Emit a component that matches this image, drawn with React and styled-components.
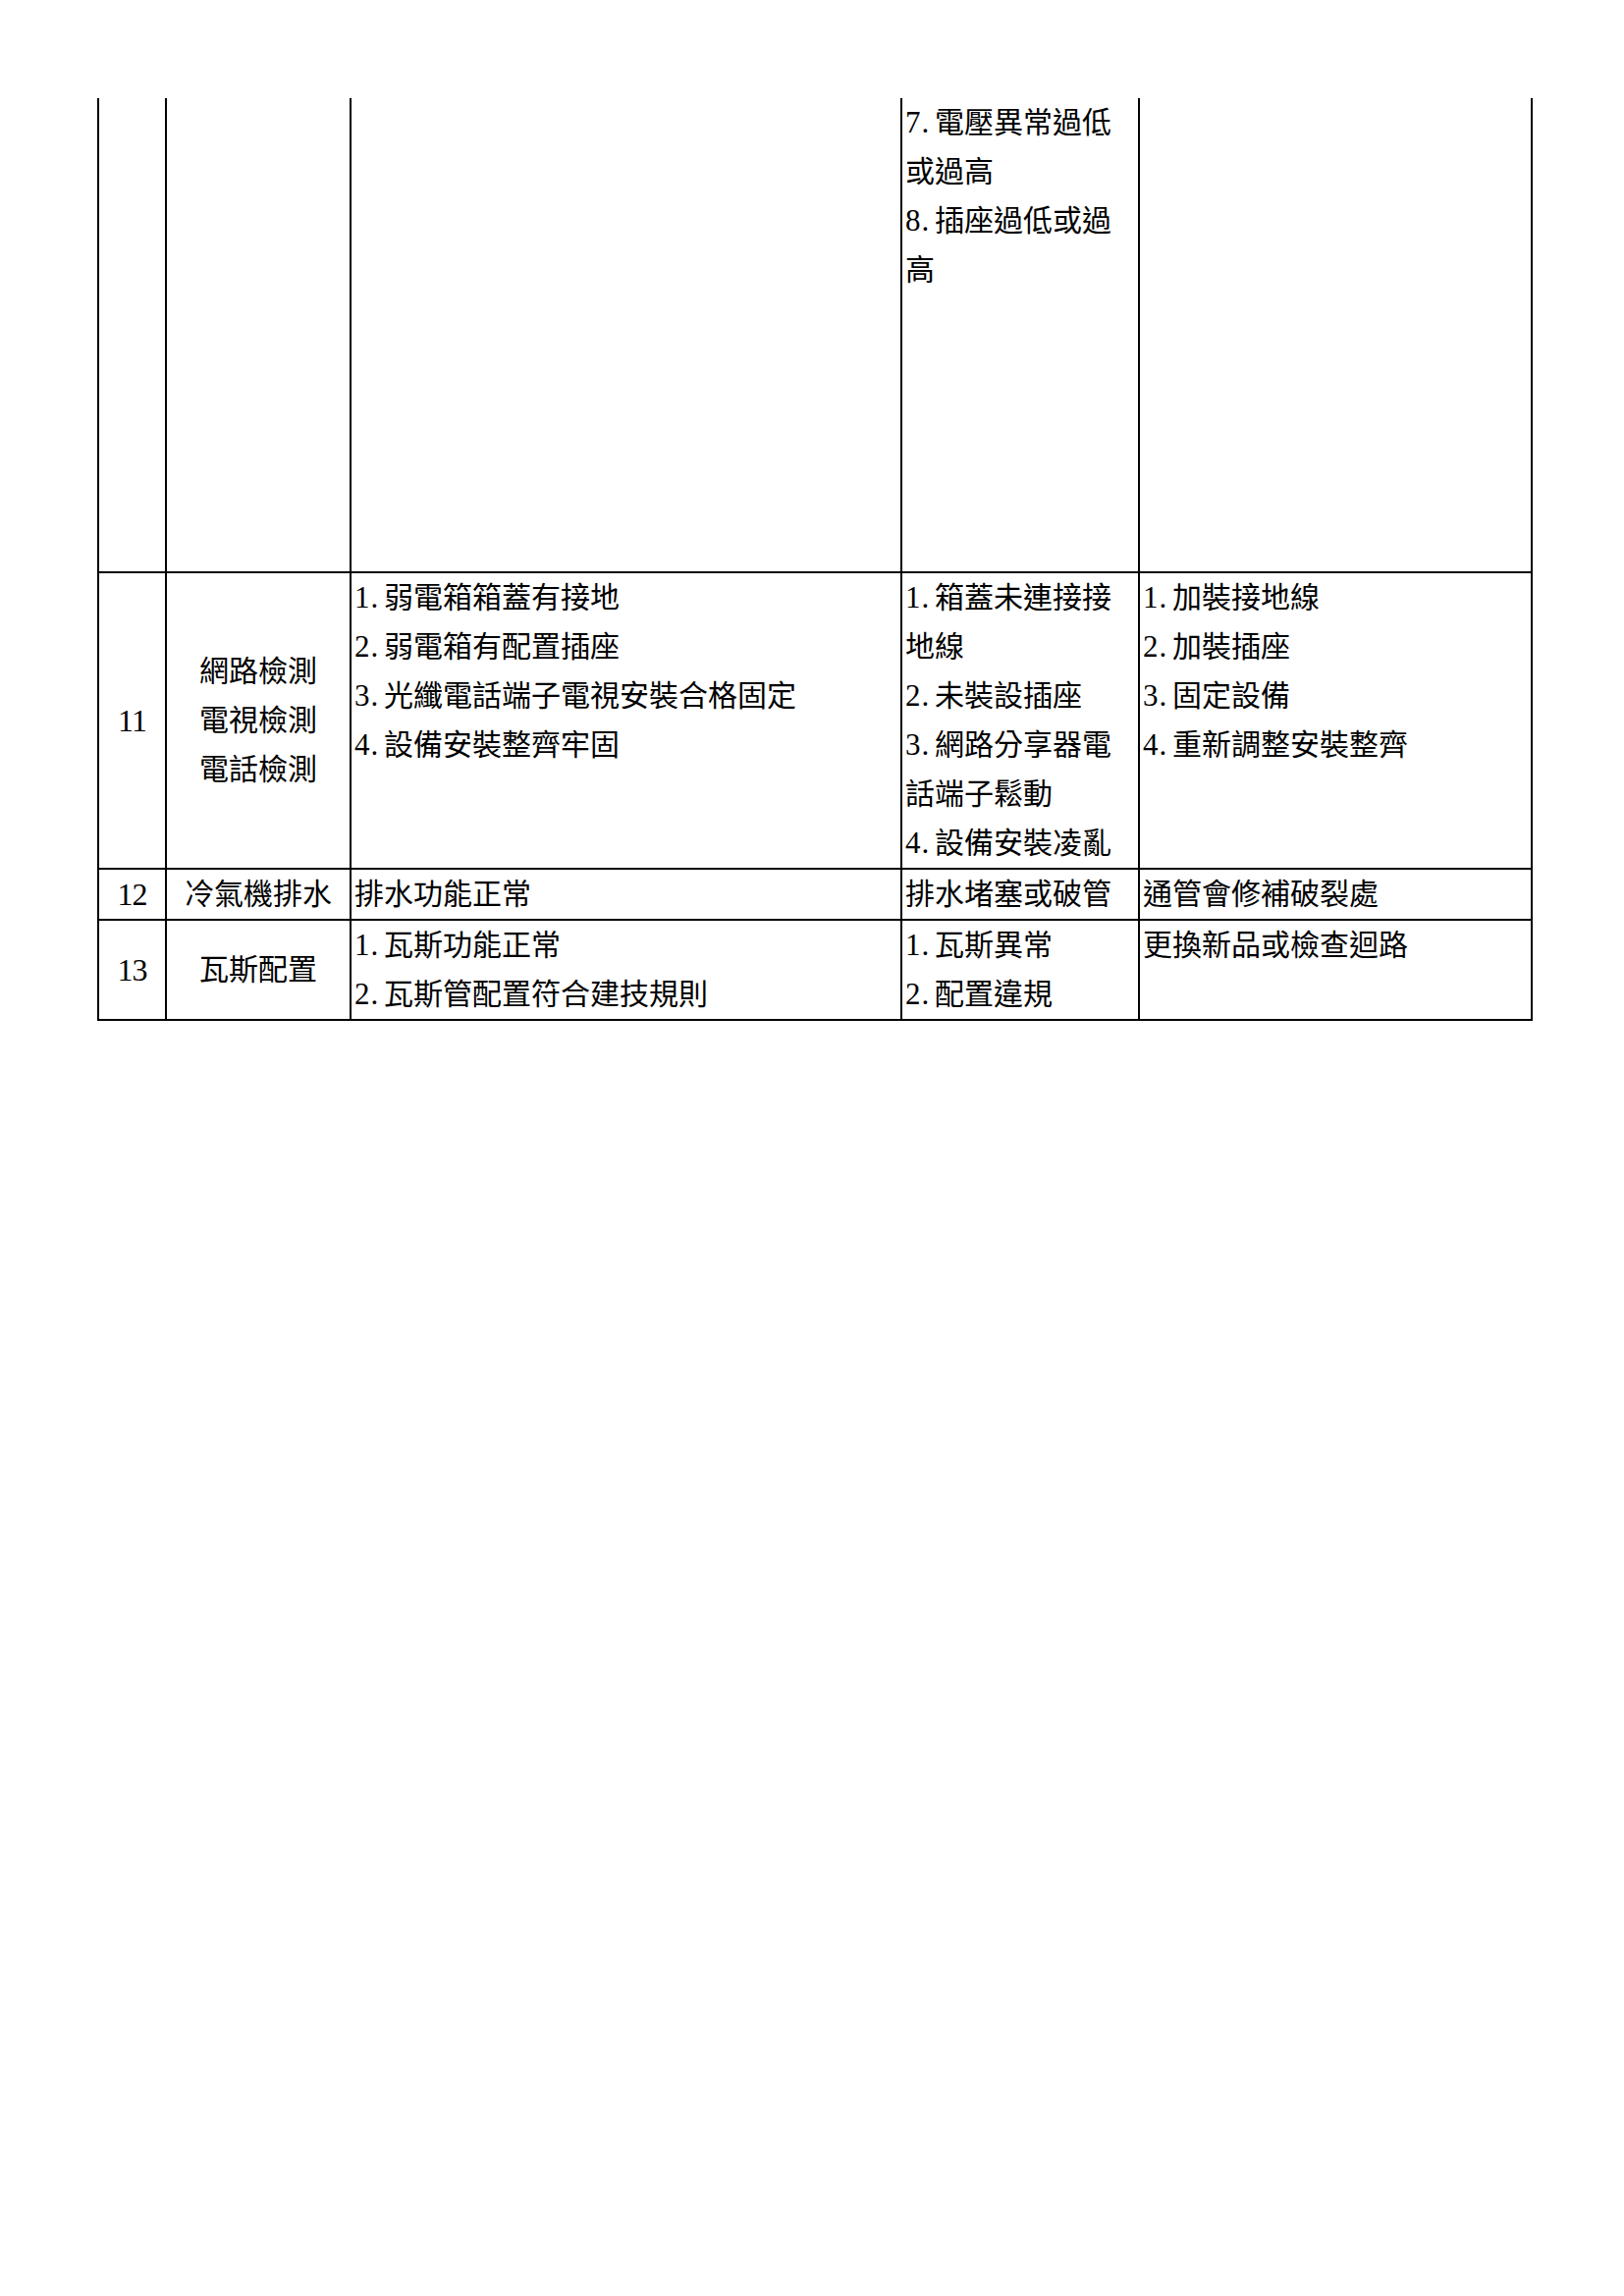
import React from 'react';
import styled, { createGlobalStyle } from 'styled-components';

const Global = createGlobalStyle`
  html, body { margin: 0; padding: 0; background: #fff; }
  body {
    font-family: "Liberation Serif", "Noto Sans CJK TC", serif;
    color: #000;
  }
`;

const Page = styled.div`
  width: 1654px;
  min-height: 2339px;
  box-sizing: border-box;
  padding: 100px 0 0 99px;
  background: #fff;
`;

const Table = styled.table`
  border-collapse: collapse;
  table-layout: fixed;
  width: 1460px;
  font-size: 30px;
  line-height: 50px;
`;

const Col = styled.col`
  width: ${(p) => p.$w}px;
`;

const Row = styled.tr`
  height: ${(p) => (p.$h ? `${p.$h}px` : 'auto')};
`;

const Cell = styled.td`
  border: 2px solid #000;
  ${(p) => (p.$open ? 'border-top: none;' : '')}
  padding: 0 0 0 ${(p) => (p.$center ? 0 : 3)}px;
  text-align: ${(p) => (p.$center ? 'center' : 'left')};
  vertical-align: ${(p) => (p.$center ? 'middle' : 'top')};
  overflow: hidden;
`;

const NoText = styled.div`
  height: 50px;
  line-height: 50px;
  font-size: 32px;
  letter-spacing: -1px;
`;

const Line = styled.div`
  display: block;
  height: 50px;
  line-height: 50px;
  white-space: nowrap;
  overflow: visible;
`;

const Num = styled.span`
  display: inline-block;
  width: 30px;
  font-size: 31px;
  line-height: 1;
  letter-spacing: 1px;
  font-family: "Liberation Serif", serif;
`;

const Entry = ({ text }) => {
  const m = text.match(/^(\d+\.)(.*)$/);
  if (!m) return <Line>{text}</Line>;
  return (
    <Line>
      <Num>{m[1]}</Num>
      <span>{m[2]}</span>
    </Line>
  );
};

const List = ({ lines }) => lines.map((t, i) => <Entry key={i} text={t} />);

const rows = [
  {
    no: '11',
    name: ['網路檢測', '電視檢測', '電話檢測'],
    std: ['1.弱電箱箱蓋有接地', '2.弱電箱有配置插座', '3.光纖電話端子電視安裝合格固定', '4.設備安裝整齊牢固'],
    defect: ['1.箱蓋未連接接', '地線', '2.未裝設插座', '3.網路分享器電', '話端子鬆動', '4.設備安裝凌亂'],
    fix: ['1.加裝接地線', '2.加裝插座', '3.固定設備', '4.重新調整安裝整齊'],
  },
  {
    no: '12',
    name: ['冷氣機排水'],
    std: ['排水功能正常'],
    defect: ['排水堵塞或破管'],
    fix: ['通管會修補破裂處'],
  },
  {
    no: '13',
    name: ['瓦斯配置'],
    std: ['1.瓦斯功能正常', '2.瓦斯管配置符合建技規則'],
    defect: ['1.瓦斯異常', '2.配置違規'],
    fix: ['更換新品或檢查迴路'],
  },
];

export default function App() {
  return (
    <>
      <Global />
      <Page>
        <Table>
          <colgroup>
            <Col $w={69} />
            <Col $w={188} />
            <Col $w={561} />
            <Col $w={242} />
            <Col $w={400} />
          </colgroup>
          <tbody>
            <Row $h={483}>
              <Cell $open $center />
              <Cell $open $center />
              <Cell $open />
              <Cell $open>
                <List lines={['7.電壓異常過低', '或過高', '8.插座過低或過', '高']} />
              </Cell>
              <Cell $open />
            </Row>
            {rows.map((r) => (
              <Row key={r.no}>
                <Cell $center>
                  <NoText>{r.no}</NoText>
                </Cell>
                <Cell $center>
                  <List lines={r.name} />
                </Cell>
                <Cell>
                  <List lines={r.std} />
                </Cell>
                <Cell>
                  <List lines={r.defect} />
                </Cell>
                <Cell>
                  <List lines={r.fix} />
                </Cell>
              </Row>
            ))}
          </tbody>
        </Table>
      </Page>
    </>
  );
}
